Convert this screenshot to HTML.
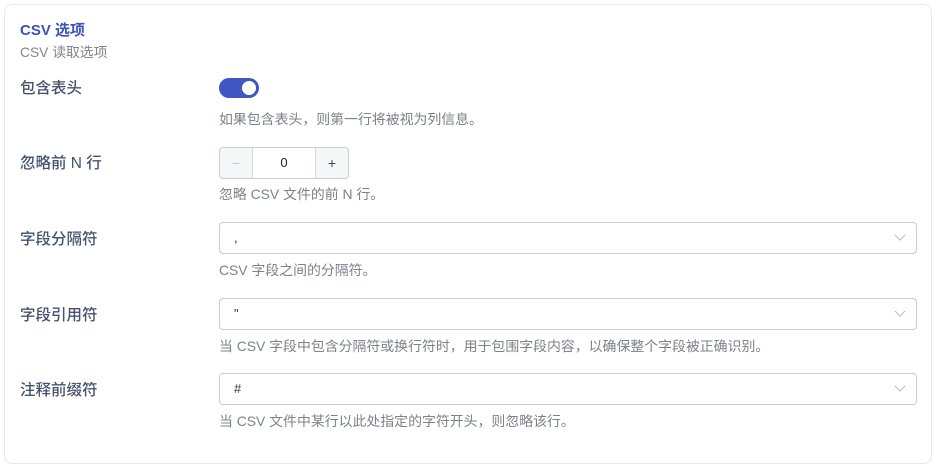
<!DOCTYPE html>
<html><head><meta charset="utf-8"><style>
body{margin:0;background:#fff;font-family:"Liberation Sans","Noto Sans CJK SC",sans-serif;}
.card{position:absolute;left:4px;top:4px;width:928px;height:460px;border:1px solid #e6e8eb;border-radius:8px;box-sizing:border-box;}
.a{position:absolute;white-space:nowrap;}
.t{left:20px;top:19px;font-size:15px;font-weight:bold;color:#3d52b8;}
.st{left:20px;top:41px;font-size:13.8px;color:#808590;}
.l{left:20px;font-size:15.5px;font-weight:500;color:#45536d;}
.h{left:219px;font-size:13.9px;color:#7c818a;}
.sel{position:absolute;left:219px;width:698px;height:32px;border:1px solid #c9ccd1;border-radius:4px;box-sizing:border-box;font-size:13px;color:#333;}
.sel span{position:absolute;left:14px;top:7px;}
.sel svg{position:absolute;right:10px;top:11px;}
</style></head><body>
<div class="card"></div>
<div class="a t">CSV 选项</div>
<div class="a st">CSV 读取选项</div>
<div class="a l" style="top:76px">包含表头</div>
<div class="a" style="left:219px;top:78px;width:40px;height:20px;border-radius:10px;background:#3f56c4"><div style="position:absolute;right:3px;top:3px;width:14px;height:14px;border-radius:50%;background:#fff"></div></div>
<div class="a h" style="top:109px">如果包含表头，则第一行将被视为列信息。</div>
<div class="a l" style="top:151px">忽略前 N 行</div>
<div class="a" style="left:219px;top:147px;width:130px;height:32px;border:1px solid #c9ccd1;border-radius:4px;box-sizing:border-box;overflow:hidden;font-size:14px;">
<div style="position:absolute;left:0;top:0;width:32px;height:30px;background:#f5f6f8;border-right:1px solid #d6d8dc;color:#c0c3c8;text-align:center;line-height:30px">−</div>
<div style="position:absolute;left:32px;width:64px;top:0;height:30px;text-align:center;line-height:30px;color:#222;font-size:13px">0</div>
<div style="position:absolute;right:0;top:0;width:32px;height:30px;background:#f5f6f8;border-left:1px solid #d6d8dc;color:#444;text-align:center;line-height:30px">+</div>
</div>
<div class="a h" style="top:184px">忽略 CSV 文件的前 N 行。</div>
<div class="a l" style="top:227px">字段分隔符</div>
<div class="sel" style="top:222px"><span>,</span><svg width="12" height="8"><path d="M1 1l5 5 5-5" fill="none" stroke="#b8bcc2" stroke-width="1"/></svg></div>
<div class="a h" style="top:260px">CSV 字段之间的分隔符。</div>
<div class="a l" style="top:303px">字段引用符</div>
<div class="sel" style="top:298px"><span>"</span><svg width="12" height="8"><path d="M1 1l5 5 5-5" fill="none" stroke="#b8bcc2" stroke-width="1"/></svg></div>
<div class="a h" style="top:336px">当 CSV 字段中包含分隔符或换行符时，用于包围字段内容，以确保整个字段被正确识别。</div>
<div class="a l" style="top:378px">注释前缀符</div>
<div class="sel" style="top:373px"><span>#</span><svg width="12" height="8"><path d="M1 1l5 5 5-5" fill="none" stroke="#b8bcc2" stroke-width="1"/></svg></div>
<div class="a h" style="top:411px">当 CSV 文件中某行以此处指定的字符开头，则忽略该行。</div>
</body></html>
